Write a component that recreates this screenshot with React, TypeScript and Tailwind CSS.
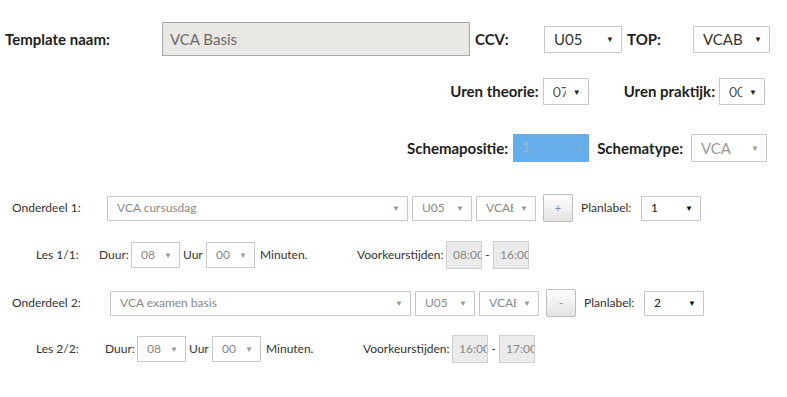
import React from 'react'

const font = { fontFamily: 'Lato, "Noto Sans", sans-serif' }

function Select({
  value,
  className,
  text = 'text-[#333]',
  arrow = 'text-[#222]',
}: {
  value: string
  className: string
  text?: string
  arrow?: string
}) {
  return (
    <div className={`flex items-center border border-[#c9c9c9] bg-white ${className}`}>
      <span className={`min-w-0 flex-1 overflow-hidden whitespace-nowrap pl-[9px] ${text}`}>{value}</span>
      <span className={`flex w-[22px] justify-center text-[8px] leading-none ${arrow}`}>▼</span>
    </div>
  )
}

function TimeBox({ value }: { value: string }) {
  return (
    <div className="flex h-[28px] w-[36px] items-center overflow-hidden whitespace-nowrap border border-[#cfcfcf] bg-[#ebebeb] pl-[6px] text-[12px] text-[#888]">
      {value}
    </div>
  )
}

function Onderdeel({
  nr,
  naam,
  sign,
  plan,
  labelW,
}: {
  nr: number
  naam: string
  sign: string
  plan: string
  labelW: string
}) {
  return (
    <div className="flex h-[28px] items-center text-[12px] text-[#333]">
      <span className={`pl-[12px] ${labelW}`}>Onderdeel {nr}:</span>
      <Select value={naam} className="h-[25px] w-[301px] text-[12px]" text="text-[#888]" arrow="text-[#999]" />
      <Select value="U05" className="ml-[4px] h-[25px] w-[60px] text-[12px]" text="text-[#888]" arrow="text-[#999]" />
      <Select value="VCAE" className="ml-[4px] h-[25px] w-[60px] text-[12px]" text="text-[#888]" arrow="text-[#999]" />
      <button className="ml-[7px] h-[28px] w-[30px] rounded-[2px] border border-[#bdbdbd] bg-gradient-to-b from-white to-[#e3e3e3] text-[11px] text-[#888]">
        {sign}
      </button>
      <span className="ml-[8px] w-[60px]">Planlabel:</span>
      <Select value={plan} className="h-[25px] w-[60px] text-[12px]" text="text-[#222]" arrow="text-[#111]" />
    </div>
  )
}

function Les({
  label,
  labelW,
  from,
  to,
}: {
  label: string
  labelW: string
  from: string
  to: string
}) {
  return (
    <div className="flex h-[28px] items-center text-[12px] text-[#333]">
      <span className={`pl-[36px] ${labelW}`}>{label}</span>
      <span className="w-[32px]">Duur:</span>
      <Select value="08" className="h-[26px] w-[49px] text-[12px]" text="text-[#888]" arrow="text-[#999]" />
      <span className="ml-[3px] w-[23px]">Uur</span>
      <Select value="00" className="h-[26px] w-[49px] text-[12px]" text="text-[#888]" arrow="text-[#999]" />
      <span className="ml-[5px] w-[97px]">Minuten.</span>
      <span className="w-[89px]">Voorkeurstijden:</span>
      <TimeBox value={from} />
      <span className="w-[11px] text-center">-</span>
      <TimeBox value={to} />
    </div>
  )
}

export default function App() {
  return (
    <div className="h-[397px] w-[787px] overflow-hidden bg-white" style={font}>
      <div className="mt-[22px] flex h-[34px] items-center text-[15px] font-bold text-[#1e1e1e]">
        <span className="w-[162px] pl-[5px]">Template naam:</span>
        <div className="flex h-[34px] w-[308px] items-center border border-[#a8a8a8] bg-[#eae8e4] pl-[7px] text-[15px] font-normal text-[#6a6a6a]">
          VCA Basis
        </div>
        <span className="ml-[5px] w-[69px]">CCV:</span>
        <Select value="U05" className="h-[27px] w-[78px] text-[15px] font-normal" />
        <span className="ml-[5px] w-[66px]">TOP:</span>
        <Select value="VCAB" className="h-[27px] w-[77px] text-[15px] font-normal" />
      </div>

      <div className="mt-[22px] flex h-[27px] items-center justify-end pr-[22px] text-[15px] font-bold text-[#1e1e1e]">
        <span>Uren theorie:</span>
        <Select value="07" className="ml-[4px] h-[27px] w-[46px] text-[14px] font-normal" text="text-[#555]" />
        <span className="ml-[35px]">Uren praktijk:</span>
        <Select value="00" className="ml-[4px] h-[27px] w-[46px] text-[14px] font-normal" text="text-[#555]" />
      </div>

      <div className="mt-[29px] flex h-[28px] items-center justify-end pr-[20px] text-[15px] font-bold text-[#1e1e1e]">
        <span>Schemapositie:</span>
        <div className="ml-[5px] flex h-[28px] w-[76px] items-center bg-[#66aee9] font-normal">
          <span className="flex-1 pl-[9px] text-[13px] text-[#9ab9d2]">1</span>
          <span className="flex w-[22px] justify-center text-[8px] text-[#8aa7c0]">▼</span>
        </div>
        <span className="ml-[8px]">Schematype:</span>
        <Select value="VCA" className="ml-[8px] h-[28px] w-[76px] text-[15px] font-normal" text="text-[#999]" arrow="text-[#999]" />
      </div>

      <div className="mt-[32px]">
        <Onderdeel nr={1} naam="VCA cursusdag" sign="+" plan="1" labelW="w-[107px]" />
      </div>
      <div className="mt-[19px]">
        <Les label="Les 1/1:" labelW="w-[99px]" from="08:00" to="16:00" />
      </div>
      <div className="mt-[20px]">
        <Onderdeel nr={2} naam="VCA examen basis" sign="-" plan="2" labelW="w-[110px]" />
      </div>
      <div className="mt-[18px]">
        <Les label="Les 2/2:" labelW="w-[105px]" from="16:00" to="17:00" />
      </div>
    </div>
  )
}
